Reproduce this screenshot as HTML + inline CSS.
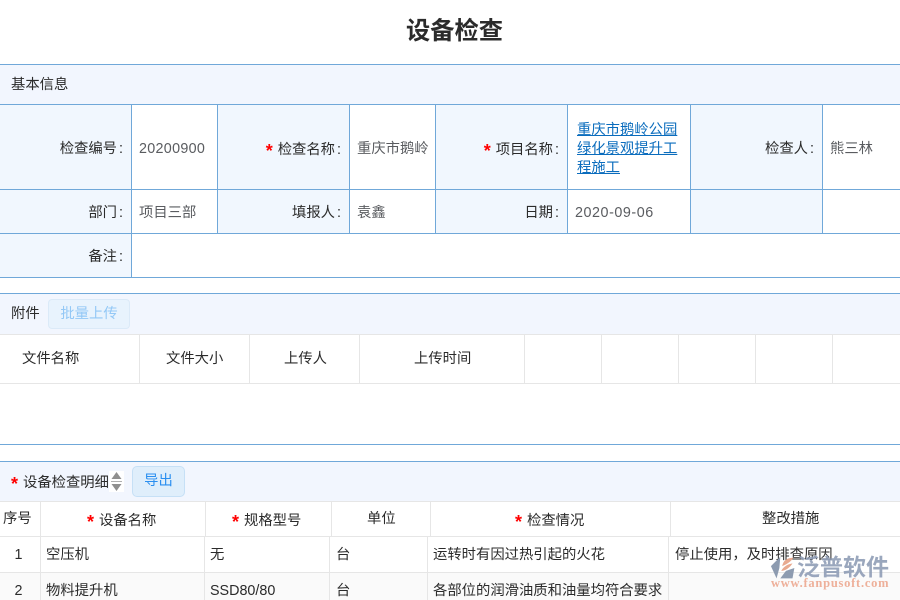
<!DOCTYPE html>
<html lang="zh-CN">
<head>
<meta charset="utf-8">
<title>设备检查</title>
<style>
html,body{margin:0;padding:0;background:#fff}
#p{position:relative;width:900px;height:600px;overflow:hidden;background:#fff;font:14.330px/20px "Liberation Sans","Noto Sans CJK SC",sans-serif;color:#2b2b2b}
#p div{position:absolute}
.t{white-space:nowrap;margin-top:1px}
.r{text-align:right}
.c{text-align:center}
.v{color:#5a5c60}
.hl{height:1px;left:0;width:900px;background:#70a8d9}
.vl{width:1px;background:#70a8d9}
.gh{height:1px;left:0;width:900px;background:#e6e6e6}
.gv{width:1px;background:#e6e6e6}
.bg{background:#f1f7fe}
.st{color:#f00;font-family:"Liberation Sans",sans-serif;font-size:18px;font-weight:700;line-height:0;vertical-align:-3px;margin-right:1px}
i{font-style:normal;margin-left:2px}
a{color:#0a6cbd;text-decoration:underline}
</style>
</head>
<body>
<div id="p">
<div class="t c" style="left:0;top:14px;width:909px;font-size:24.250px;line-height:34px;font-weight:700;color:#2b2b2b">设备检查</div>

<!-- basic info -->
<div style="left:0;top:65px;width:900px;height:39px;background:#f2f6fe"></div>
<div class="bg" style="left:0;top:105px;width:131px;height:172px"></div>
<div class="bg" style="left:218px;top:105px;width:131px;height:128px"></div>
<div class="bg" style="left:436px;top:105px;width:131px;height:128px"></div>
<div class="bg" style="left:691px;top:105px;width:131px;height:128px"></div>
<div class="hl" style="top:64px"></div>
<div class="hl" style="top:104px"></div>
<div class="hl" style="top:189px"></div>
<div class="hl" style="top:233px"></div>
<div class="hl" style="top:277px"></div>
<div class="vl" style="left:131px;top:104px;height:173px"></div>
<div class="vl" style="left:217px;top:104px;height:129px"></div>
<div class="vl" style="left:349px;top:104px;height:129px"></div>
<div class="vl" style="left:435px;top:104px;height:129px"></div>
<div class="vl" style="left:567px;top:104px;height:129px"></div>
<div class="vl" style="left:690px;top:104px;height:129px"></div>
<div class="vl" style="left:822px;top:104px;height:129px"></div>
<div class="t" style="left:11px;top:74px">基本信息</div>

<div class="t r" style="left:0;width:123px;top:138px">检查编号<i>:</i></div>
<div class="t v" style="left:139px;top:138px;letter-spacing:.3px">20200900</div>
<div class="t r" style="left:218px;width:123px;top:139px"><span class="st">*</span> 检查名称<i>:</i></div>
<div class="t v" style="left:357px;top:138px">重庆市鹅岭</div>
<div class="t r" style="left:436px;width:123px;top:139px"><span class="st">*</span> 项目名称<i>:</i></div>
<div style="left:577px;top:121px;width:104px;line-height:19px;color:#0a6cbd"><a href="#">重庆市鹅岭公园绿化景观提升工程施工</a></div>
<div class="t r" style="left:691px;width:123px;top:138px">检查人<i>:</i></div>
<div class="t v" style="left:830px;top:138px">熊三林</div>

<div class="t r" style="left:0;width:123px;top:202px">部门<i>:</i></div>
<div class="t v" style="left:139px;top:202px">项目三部</div>
<div class="t r" style="left:218px;width:123px;top:202px">填报人<i>:</i></div>
<div class="t v" style="left:357px;top:202px">袁鑫</div>
<div class="t r" style="left:436px;width:123px;top:202px">日期<i>:</i></div>
<div class="t v" style="left:575px;top:202px;letter-spacing:.55px">2020-09-06</div>
<div class="t r" style="left:0;width:123px;top:246px">备注<i>:</i></div>

<!-- attachments -->
<div style="left:0;top:294px;width:900px;height:40px;background:#f2f6fe"></div>
<div class="hl" style="top:293px"></div>
<div class="gh" style="top:334px"></div>
<div class="gh" style="top:383px"></div>
<div class="t" style="left:11px;top:303px">附件</div>
<div class="t c" style="left:48px;top:298px;width:80px;height:28px;line-height:29px;border:1px solid #dbeaf8;border-radius:4px;background:#e8f3fd;color:#93c8f6">批量上传</div>
<div class="gv" style="left:139px;top:335px;height:48px"></div>
<div class="gv" style="left:249px;top:335px;height:48px"></div>
<div class="gv" style="left:359px;top:335px;height:48px"></div>
<div class="gv" style="left:524px;top:335px;height:48px"></div>
<div class="gv" style="left:601px;top:335px;height:48px"></div>
<div class="gv" style="left:678px;top:335px;height:48px"></div>
<div class="gv" style="left:755px;top:335px;height:48px"></div>
<div class="gv" style="left:832px;top:335px;height:48px"></div>
<div class="t" style="left:22px;top:348px">文件名称</div>
<div class="t" style="left:166px;top:348px">文件大小</div>
<div class="t" style="left:284px;top:348px">上传人</div>
<div class="t" style="left:414px;top:348px">上传时间</div>
<div class="hl" style="top:444px"></div>

<!-- details -->
<div style="left:0;top:462px;width:900px;height:39px;background:#f2f6fe"></div>
<div class="hl" style="top:461px"></div>
<div class="gh" style="top:501px"></div>
<div class="gh" style="top:536px"></div>
<div class="gh" style="top:572px"></div>
<div style="left:0;top:573px;width:900px;height:27px;background:#fafafa"></div>
<div class="t" style="left:11px;top:472px"><span class="st">*</span> 设备检查明细</div>
<div style="left:109px;top:471px;width:15px;height:21px;background:#fff"></div>
<svg style="position:absolute;left:109px;top:471px" width="15" height="21" viewBox="0 0 15 21"><path d="M2.500 8L7.500 1L12.500 8Z" fill="#8f8f8f"/><path d="M2.500 13L12.500 13L7.500 20Z" fill="#8f8f8f"/><path d="M2 10.500H13" stroke="#b0b0b0" stroke-width="1"/></svg>
<div class="t c" style="left:132px;top:465px;width:51px;height:29px;line-height:29px;border:1px solid #c6e0f6;border-radius:5px;background:#dfeefb;color:#2b8ff0">导出</div>

<div class="gv" style="left:40px;top:502px;height:98px"></div>
<div class="gv" style="left:205px;top:502px;height:34px"></div>
<div class="gv" style="left:331px;top:502px;height:34px"></div>
<div class="gv" style="left:430px;top:502px;height:34px"></div>
<div class="gv" style="left:670px;top:502px;height:34px"></div>
<div class="gv" style="left:204px;top:537px;height:63px"></div>
<div class="gv" style="left:329px;top:537px;height:63px"></div>
<div class="gv" style="left:427px;top:537px;height:63px"></div>
<div class="gv" style="left:668px;top:537px;height:63px"></div>

<div class="t" style="left:3px;top:508px">序号</div>
<div class="t" style="left:87px;top:510px"><span class="st">*</span> 设备名称</div>
<div class="t" style="left:232px;top:510px"><span class="st">*</span> 规格型号</div>
<div class="t" style="left:367px;top:508px">单位</div>
<div class="t" style="left:515px;top:510px"><span class="st">*</span> 检查情况</div>
<div class="t" style="left:762px;top:508px">整改措施</div>

<div class="t c" style="left:0;width:37px;top:544px">1</div>
<div class="t" style="left:46px;top:544px">空压机</div>
<div class="t" style="left:210px;top:544px">无</div>
<div class="t" style="left:336px;top:544px">台</div>
<div class="t" style="left:433px;top:544px">运转时有因过热引起的火花</div>
<div class="t" style="left:675px;top:544px">停止使用，及时排查原因</div>

<div class="t c" style="left:0;width:37px;top:580px">2</div>
<div class="t" style="left:46px;top:580px">物料提升机</div>
<div class="t" style="left:210px;top:580px">SSD80/80</div>
<div class="t" style="left:336px;top:580px">台</div>
<div class="t" style="left:433px;top:580px">各部位的润滑油质和油量均符合要求</div>

<!-- watermark -->
<svg style="position:absolute;left:770px;top:555px" width="30" height="26" viewBox="0 0 32 26"><path d="M11 1L1 11L7 24L10 13Z" fill="#8d9bb0"/><path d="M13 11C14 5 18 2 25 2C23 5 20 8 13 11Z" fill="#e8a98f"/><path d="M24 8C18 9 14 12 12 16C16 16 21 13 24 8Z" fill="#e8a98f"/><path d="M11 24L17 16L26 13L24 24Z" fill="#8d9bb0"/></svg>
<div class="t" style="left:797px;top:551px;font-size:23px;line-height:30px;color:#8d9bb5;font-weight:700;opacity:.88">泛普软件</div>
<div class="t" style="left:771px;top:575px;font:700 12.500px/14px 'Liberation Serif',serif;letter-spacing:.75px;color:#eeb09a">www.fanpusoft.com</div>
</div>
</body>
</html>
